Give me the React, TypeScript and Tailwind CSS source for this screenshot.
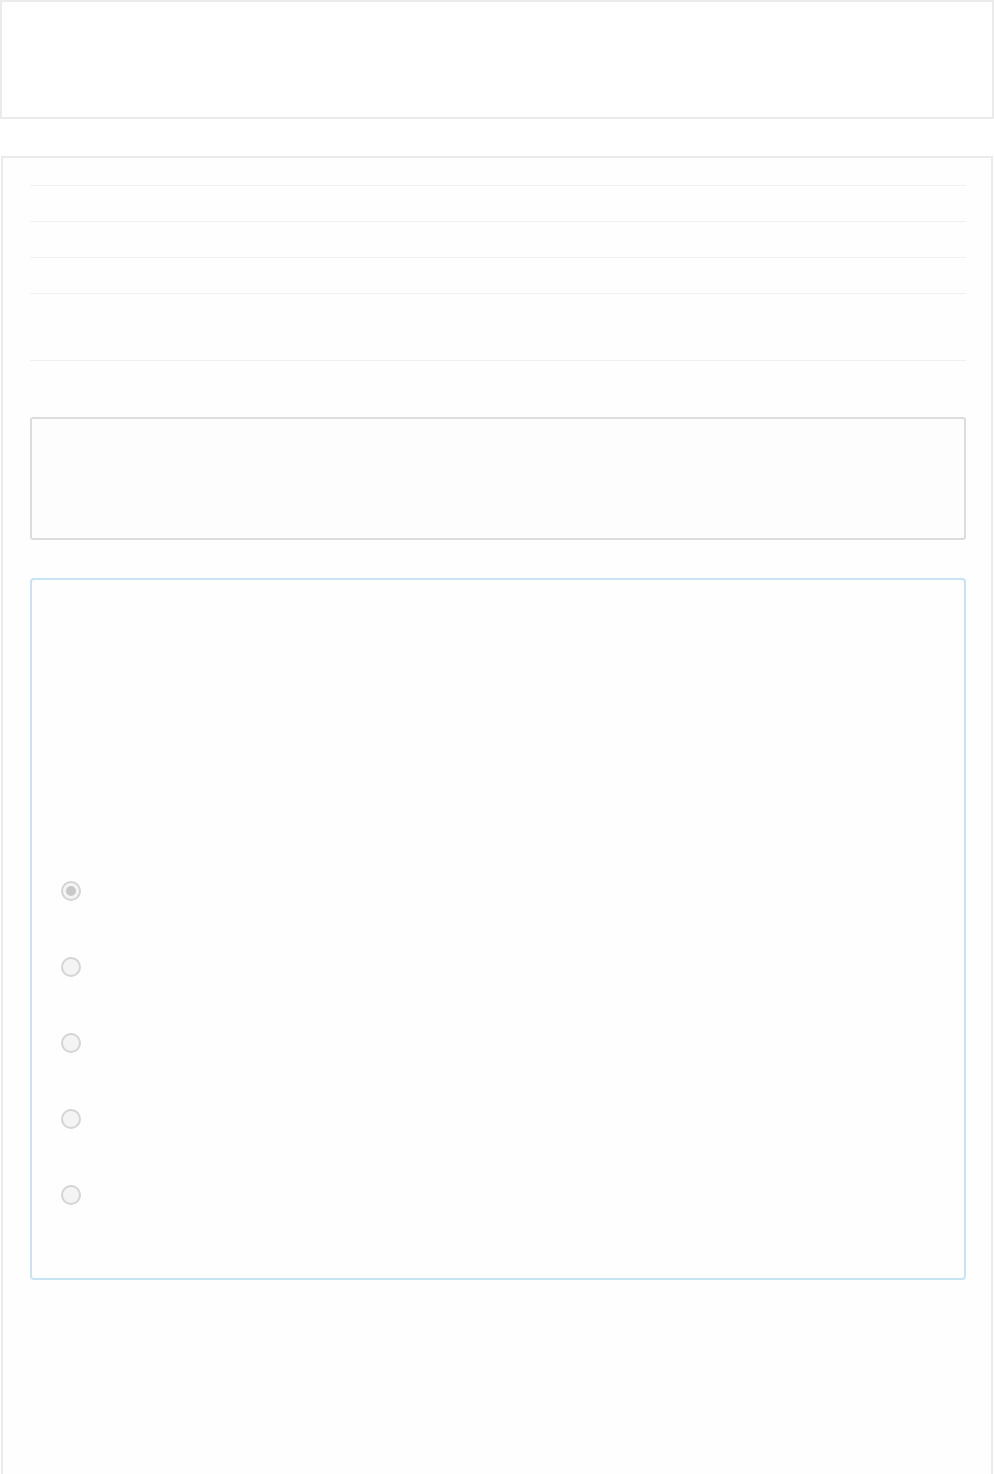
const Radio = ({ checked }: { checked?: boolean }) => (
  <div className="w-[20px] h-[20px] rounded-full border-2 border-[#d4d4d4] bg-[#f4f4f4] flex items-center justify-center">
    {checked && <div className="w-[10px] h-[10px] rounded-full bg-[#c8c8c8]" />}
  </div>
);

export default function App() {
  const rows = [0, 1, 2];
  const options = [true, false, false, false, false];

  return (
    <div className="w-[994px] h-[1474px] overflow-hidden bg-white font-['Liberation_Sans',sans-serif]">
      <header className="h-[119px] border-2 border-[#ebebeb] bg-white" />

      <main className="mt-[37px] mx-[1px] h-[1318px] border-2 border-b-0 border-[#ebebeb] bg-[#fefefe] pl-[27px] pr-[25px] pt-[27px]">
        <div>
          {rows.map((r) => (
            <div key={r} className="h-[36px] border-t border-[#f0f0f0]" />
          ))}
          <div className="h-[67px] border-t border-[#f0f0f0]" />
          <div className="border-t border-[#efefef]" />
        </div>

        <section className="mt-[56px] h-[123px] rounded-[3px] border-2 border-[#dcdcdc] bg-[#fdfdfd]" />

        <section className="mt-[38px] h-[702px] rounded-[4px] border-2 border-[#c6e4f3] bg-[#fefefe] pl-[29px] pt-[301px]">
          <div className="flex flex-col gap-[56px]">
            {options.map((c, i) => (
              <Radio key={i} checked={c} />
            ))}
          </div>
        </section>
      </main>
    </div>
  );
}
